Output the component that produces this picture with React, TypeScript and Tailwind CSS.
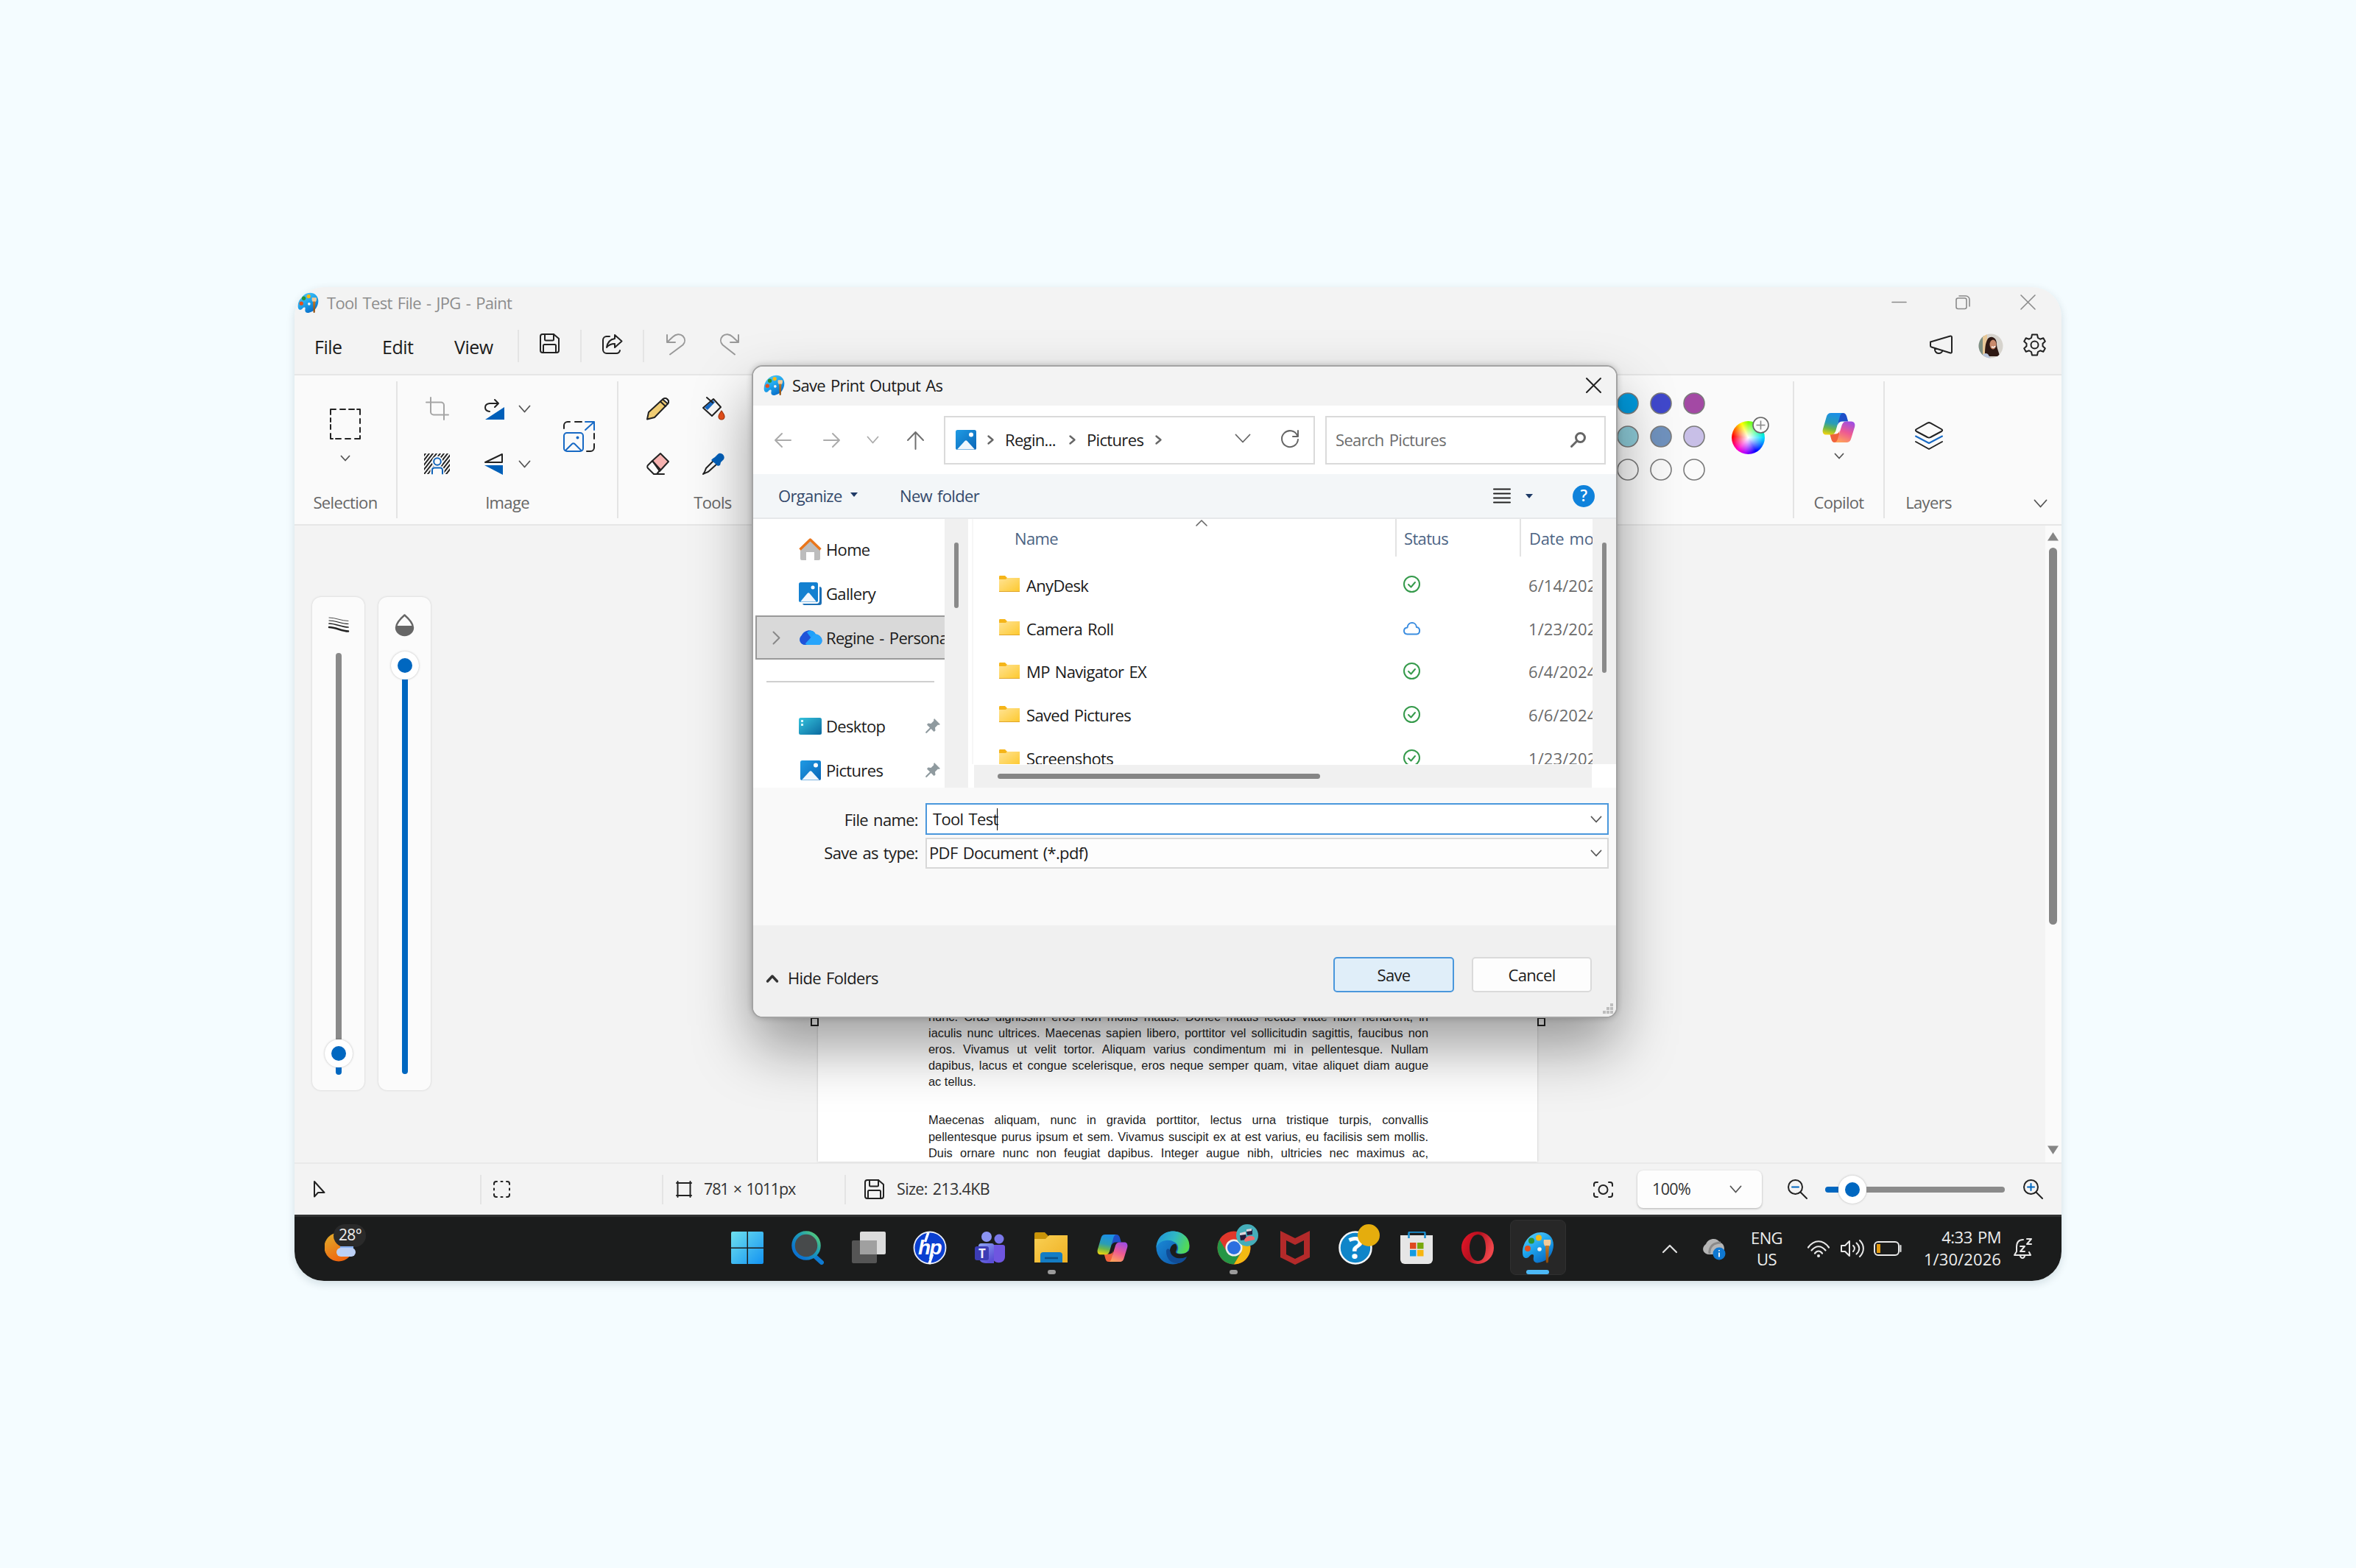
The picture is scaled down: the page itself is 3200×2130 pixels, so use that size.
import React from "react";

interface IconProps {
    w: number;
    h: number;
    className?: string;
    children?: React.ReactNode;
    vb?: string;
    sw?: number;
    color?: string;
}

// Base line icon, the viewBox follows the size unless it is given
const Icon = ({ w, h, className = "", children, vb, sw = 2, color = "#222" }: IconProps) => (
    <svg
        width={w}
        height={h}
        viewBox={vb ?? `0 0 ${w} ${h}`}
        className={`shrink-0 overflow-visible ${className}`}
        fill="none"
        stroke={color}
        strokeWidth={sw}
        strokeLinecap="round"
        strokeLinejoin="round"
    >
        {children}
    </svg>
);

const Down = ({ w, h, sw = 1.8, color = "#555", className = "" }: IconProps) => (
    <Icon w={w} h={h} sw={sw} color={color} className={className}>
        <path d={`M0.5 0.5L${w / 2} ${h - 0.5}L${w - 0.5} 0.5`} />
    </Icon>
);

const Right = ({ w, h, sw = 2, color = "#555", className = "" }: IconProps) => (
    <Icon w={w} h={h} sw={sw} color={color} className={className}>
        <path d={`M0.5 0.5L${w - 0.5} ${h / 2}L0.5 ${h - 0.5}`} />
    </Icon>
);

const PaintIcon = ({ size, className = "" }: { size: number; className?: string }) => (
    <svg width={size} height={size} viewBox="0 0 44 44" className={`shrink-0 ${className}`}>
        <defs>
            <linearGradient id="paintBlue" x1="0" y1="0" x2="0.6" y2="1">
                <stop offset="0" stopColor="#5fd2fb" />
                <stop offset="0.55" stopColor="#1ea4ec" />
                <stop offset="1" stopColor="#0a6fc9" />
            </linearGradient>
            <linearGradient id="paintBrush" x1="0" y1="0" x2="0" y2="1">
                <stop offset="0" stopColor="#c47a2a" />
                <stop offset="1" stopColor="#8a4708" />
            </linearGradient>
        </defs>
        <path
            d="M26 1C12 1 1 14 1 28c0 6 2 8 5 8 4 0 5-5 8-5 4 0 1 4 2 8 1 3 4 4 8 3 12-2 19-13 19-24C43 8 36 1 26 1z"
            fill="url(#paintBlue)"
        />
        <circle cx="8" cy="23" r="4" fill="#e2501f" />
        <circle cx="13" cy="12.500" r="4" fill="#2a9433" />
        <circle cx="23" cy="8.500" r="4" fill="#f6bb14" />
        <circle cx="24" cy="24" r="2.800" className="fill-[#f3f3f3]" />
        <path d="M30 11h9c1 4 0 8-2 9h-5c-2-1-3-5-2-9z" fill="#f2cb9b" />
        <path d="M32 19h5l-1 22c-.3 2-3 2-3.200 0z" fill="url(#paintBrush)" />
    </svg>
);

const CopilotIcon = ({ w, h, id }: { w: number; h: number; id: string }) => (
    <svg width={w} height={h} viewBox="0 0 48 44" preserveAspectRatio="none" className="shrink-0">
        <defs>
            <linearGradient id={`${id}a`} x1="0.4" y1="0" x2="0.2" y2="1">
                <stop offset="0" stopColor="#1b8fe6" />
                <stop offset="0.45" stopColor="#2a9db5" />
                <stop offset="0.7" stopColor="#6bb54b" />
                <stop offset="1" stopColor="#f5d40c" />
            </linearGradient>
            <linearGradient id={`${id}b`} x1="0.7" y1="0" x2="0.3" y2="1">
                <stop offset="0" stopColor="#a04de0" />
                <stop offset="0.5" stopColor="#ee5a92" />
                <stop offset="1" stopColor="#ffa35a" />
            </linearGradient>
        </defs>
        <path d="M24 1h6c3 0 4.500 2 5.500 5l2 7h-8c-4 0-6 2-7 5z" fill="#1e4fc8" />
        <path d="M24 43h-6c-3 0-4-2-5-5l-2-7h7c4 0 6-1 7-5z" fill="#f0623c" />
        <path d="M13 1h18c-4 0-5 3-6 7l-5 17c-1 4-3 7-7 7H6c-5 0-6-4-5-8L6 7c1-4 3-6 7-6z" fill={`url(#${id}a)`} />
        <path d="M35 43H17c4 0 5-3 6-7l5-16c1-4 3-7 7-7h7c5 0 6 4 5 8l-5 16c-1 4-3 6-7 6z" fill={`url(#${id}b)`} />
    </svg>
);

const PictureIcon = ({ w = 28, h = 27 }: { w?: number; h?: number }) => (
    <svg width={w} height={h} viewBox="0 0 28 27" className="shrink-0">
        <defs>
            <linearGradient id="picBlue" x1="0" y1="0" x2="1" y2="1">
                <stop offset="0" stopColor="#1f9be4" />
                <stop offset="1" stopColor="#0a66b8" />
            </linearGradient>
        </defs>
        <rect width="28" height="27" rx="2.500" fill="url(#picBlue)" />
        <path d="M2 26.500L12.500 15c1-1 2-1 3 0L26 26.500z" fill="#f1f7fd" />
        <circle cx="21" cy="6.500" r="3" fill="#fff" />
    </svg>
);

const FolderIcon = () => (
    <svg width="28" height="22" viewBox="0 0 28 22" className="shrink-0">
        <defs>
            <linearGradient id="folderFront" x1="0" y1="0" x2="1" y2="1">
                <stop offset="0" stopColor="#ffe394" />
                <stop offset="1" stopColor="#fdc92f" />
            </linearGradient>
        </defs>
        <path d="M0 1.500C0 .5.500 0 1.500 0H8l3 3H28v4H0z" fill="#f5b519" />
        <path d="M0 5h9l2-2h17v18.500H0z" fill="url(#folderFront)" />
        <path d="M0 21.500h28" stroke="#e0a52a" />
    </svg>
);

const SavedIcon = ({ size = 27 }: { size?: number }) => (
    <Icon w={size} h={size} vb="0 0 27 27">
        <path d="M4 1h15l7 6v16a3 3 0 0 1-3 3H4a3 3 0 0 1-3-3V4a3 3 0 0 1 3-3z" />
        <path d="M7 1v7a1.500 1.500 0 0 0 1.500 1.500h9A1.500 1.500 0 0 0 19 8V1M5 26V16.500A1.500 1.500 0 0 1 6.500 15h14a1.500 1.500 0 0 1 1.500 1.500V26" />
    </Icon>
);

const Pin = () => (
    <svg width="20" height="20" viewBox="0 0 20 20" className="shrink-0">
        <path d="M12 0l8 8-2 1-1-.5-4 4 .5 4-2 1.500-4-4L1.500 20 0 19.500.500 18 6 12.500l-4-4L3.500 6.500l4 .5 4-4L11 2z" fill="#8f9a9f" />
    </svg>
);

const TitleBar = () => (
    <div className="flex h-[44px] items-start text-[#8d8d8d]">
        <PaintIcon size={29} className="ml-[4px] mt-[7px]" />
        <span className="ml-[11px] mt-[6px] leading-[30px]">Tool Test File - JPG - Paint</span>
        <div className="ml-auto mr-[36px] mt-[11px] flex items-center">
            <Icon w={19} h={19} color="#8a8a8a" sw={1.6}><path d="M0 9.500h19" /></Icon>
            <Icon w={20} h={19} color="#8a8a8a" sw={1.6} className="ml-[67px]">
                <rect x="1" y="4" width="14" height="14.500" rx="2.500" />
                <path d="M5 1h9a5 5 0 0 1 5 5v9" />
            </Icon>
            <Icon w={19} h={19} color="#8a8a8a" sw={1.6} className="ml-[69px]"><path d="M0 0l19 19M19 0L0 19" /></Icon>
        </div>
    </div>
);

const Divider = ({ className = "" }: { className?: string }) => <div className={`w-[2px] shrink-0 bg-[#e4e4e4] ${className}`} />;

const MenuBar = () => (
    <div className="flex h-[76px] items-start border-b-2 border-[#e6e6e6]">
        <div className="flex w-[303px] shrink-0 pl-[27px] pt-[20px] text-[25px] leading-[34px] tracking-[-0.5px]">
            <span className="w-[92px]">File</span>
            <span className="w-[98px]">Edit</span>
            <span>View</span>
        </div>
        <Divider className="mt-[14px] h-[44px]" />
        <div className="flex w-[83px] justify-center pt-[19px]"><SavedIcon /></div>
        <Divider className="mt-[14px] h-[44px]" />
        <div className="flex w-[83px] justify-center pt-[20px]">
            <Icon w={28} h={27}>
                <path d="M10 3H6a5 5 0 0 0-5 5v13a5 5 0 0 0 5 5h13a5 5 0 0 0 5-4" />
                <path d="M17 1l9.500 8.500L17 18v-5c-5 0-8 1-11 5 1-7 4-11 11-12z" />
            </Icon>
        </div>
        <Divider className="mt-[14px] h-[44px]" />
        <Icon w={26} h={29} color="#999" className="ml-[30px] mt-[19px]">
            <path d="M1 2v10h11M1.500 11.500L9 4.500c4-4 10-4.500 13.500-1 3.500 3.700 3.300 8.500 0 12L5 28.500" />
        </Icon>
        <Icon w={26} h={29} color="#999" className="ml-[47px] mt-[19px]">
            <path d="M25 2v10H14M24.500 11.500L17 4.500c-4-4-10-4.500-13.500-1-3.500 3.700-3.300 8.500 0 12L20 28.500" />
        </Icon>
        <div className="ml-auto mr-[22px] flex items-center pt-[16px]">
            <Icon w={31} h={27} className="-mt-[3px]">
                <path d="M1 10.500L28 2.500a1.500 1.500 0 0 1 2 1.500v20a1.500 1.500 0 0 1-2 1.500L2.500 17.500A2 2 0 0 1 1 15.500zM7 19.500c-.5 3 1.500 6.500 5 6.500s5-2 5.500-4" />
            </Icon>
            <svg width="34" height="34" viewBox="0 0 34 34" className="ml-[35px] mt-[3px] shrink-0">
                <clipPath id="avatarClip"><circle cx="17" cy="17" r="16.500" /></clipPath>
                <g clipPath="url(#avatarClip)">
                    <rect width="34" height="34" fill="#d6d3cd" />
                    <rect width="8" height="34" fill="#7d8f83" />
                    <rect x="6" width="6" height="34" fill="#e8c898" />
                    <path d="M13 7c5-5 12-1 12 7 0 7 3 10 4 17H9c0-8 0-18 4-24z" fill="#2e1813" />
                    <ellipse cx="20" cy="15" rx="4.500" ry="6.500" fill="#c98a6c" />
                    <path d="M18 18c2 1 4 1 5-1" stroke="#fff" strokeWidth="1.500" fill="none" />
                    <path d="M4 34c1-7 6-8 9-6l4 6z" fill="#b9c6dc" />
                </g>
            </svg>
            <Icon w={29} h={31} className="-mt-[1px] ml-[28px]">
                <path d="M11 1.500h7l1 4.500 3 1.700 4.300-1.500 2.500 4.500-3.300 3v3.600l3.300 3-2.500 4.500-4.300-1.500-3 1.700-1 4.500h-7l-1-4.500-3-1.700-4.300 1.500L.2 20.300l3.300-3v-3.600l-3.300-3 2.500-4.500L7 7.700 10 6z" />
                <circle cx="14.500" cy="15.500" r="5" />
            </Icon>
        </div>
    </div>
);

const GroupLabel = ({ children }: { children: React.ReactNode }) => (
    <span className="mt-auto pb-[13px] text-center leading-[34px] text-[#666]">{children}</span>
);

const palette = ["#0099dc", "#4048cc", "#a349a4", "#8dcbd8", "#7092be", "#c8bfe7", "transparent", "transparent", "transparent"];

// Diagonal hatch offsets of the background removal icon
const hatch = [-20, -15, -10, -5, 0, 5, 10, 15, 20, 25, 30];

const Ribbon = () => (
    <div className="flex h-[204px] border-b-2 border-[#e6e6e6] bg-[#fafafa] text-[22px]">
        <div className="flex w-[138px] flex-col items-center pt-[45px]">
            <Icon w={42} h={42}>
                <path d="M1 8V1h7M14 1h7M26 1h7M37 1h4v7M41 14v6M41 26v6M41 37v4h-7M28 41h-7M15 41H8M4 41H1v-7M1 28v-6M1 18v-5" />
            </Icon>
            <Down w={12} h={7} className="mt-[22px]" />
            <GroupLabel>Selection</GroupLabel>
        </div>
        <Divider className="mt-[8px] h-[186px]" />
        <div className="flex w-[298px] flex-col">
            <div className="flex pl-[36px] pt-[30px]">
                <div className="flex w-[82px] flex-col">
                    <Icon w={30} h={30} color="#a5a5a5" className="ml-[3px]">
                        <path d="M0 6.500h20a4 4 0 0 1 4 4V30M6 0v19.500a4 4 0 0 0 4 4H30" />
                    </Icon>
                    <Icon w={35} h={28} className="mt-[46px]">
                        <clipPath id="hatchClip"><rect width="35" height="28" /></clipPath>
                        <g clipPath="url(#hatchClip)">
                            {hatch.map((x) => (
                                <path key={x} d={`M${x} 28L${x + 22} 0`} />
                            ))}
                            <circle cx="18" cy="11" r="7.500" fill="#fafafa" stroke="none" />
                            <path d="M8.500 28v-5a6 6 0 0 1 6-6h7a6 6 0 0 1 6 6v5z" fill="#fafafa" stroke="none" />
                        </g>
                        <circle cx="18" cy="11" r="4.800" stroke="#0f62b8" />
                        <path d="M11 27.500v-5a3 3 0 0 1 3-3h8a3 3 0 0 1 3 3v5" stroke="#0f62b8" />
                    </Icon>
                </div>
                <div className="flex w-[107px] flex-col gap-[46px]">
                    <div className="flex items-center">
                        <Icon w={27} h={28} className="mt-[2px]">
                            <path d="M14 1l5 5-5 5M19 6H7c-8 1-8 10 0 11" />
                            <path d="M27 11v17H1z" fill="#005fb8" stroke="none" />
                        </Icon>
                        <Down w={15} h={9} className="ml-[20px]" />
                    </div>
                    <div className="flex items-center">
                        <Icon w={25} h={29}>
                            <path d="M24 1v11H1z" />
                            <path d="M0 16h25v13z" fill="#005fb8" stroke="none" />
                        </Icon>
                        <Down w={15} h={9} className="ml-[22px]" />
                    </div>
                </div>
                <Icon w={43} h={42} className="mt-[32px]">
                    <path d="M1 10V6a5 5 0 0 1 5-5h3M16 1h9M42 17v7M42 31v5a5 5 0 0 1-5 5h-5" />
                    <g stroke="#1769c4">
                        <path d="M30 1h12v11M41 2L30 12" />
                        <rect x="1" y="16" width="26" height="25" rx="4" />
                        <path d="M3 40l9-9c1-1 2.500-1 3.500 0l9 9" />
                        <circle cx="19.500" cy="22.500" r="1" fill="#1769c4" />
                    </g>
                </Icon>
            </div>
            <GroupLabel>Image</GroupLabel>
        </div>
        <Divider className="mt-[8px] h-[186px]" />
        <div className="flex w-[256px] flex-col">
            <div className="grid grid-cols-[76px_76px] gap-y-[45px] pl-[38px] pt-[30px]">
                <Icon w={31} h={30}>
                    <path d="M3 20L22 2.500c5-4 10 2 7 6L11 27 1 29.500z" fill="#f0cd74" />
                    <path d="M22 2.500c5-4 10 2 7 6z" fill="#fff" />
                    <path d="M19 5.500l7 6.500" />
                </Icon>
                <Icon w={31} h={30}>
                    <path d="M1 14L15 2l10 11-12 12z" fill="#fafafa" />
                    <path d="M3 13.500L14 3.500l3 3L7 17z" fill="#1769c4" stroke="none" />
                    <path d="M6 0l8 7" />
                    <path d="M26 18c3 4 4 6 4 8a4 4 0 0 1-8 0c0-2 1-4 4-8z" fill="#e8501c" stroke="#a5330b" strokeWidth="1.200" />
                </Icon>
                <Icon w={31} h={30}>
                    <path d="M8 11L19 1l11 11-12 13z" fill="#f6b2b0" />
                    <path d="M8 11l11 12-5 6h-4l-8-8c-1-1-1-3 0-4zM12 29h12" />
                </Icon>
                <Icon w={31} h={30}>
                    <path d="M15 11L5 21c-1 2-1 5-4 8 3-2 6-2 8-4l11-10" />
                    <path d="M14 8l3-2 4-4c4-4 11 2 8 7l-4 4-1 4-3 1-9-8z" fill="#005fb8" stroke="none" />
                </Icon>
            </div>
            <GroupLabel>Tools</GroupLabel>
        </div>
        <div className="ml-auto flex">
            <div className="grid h-fit grid-cols-[45px_45px_45px] grid-rows-[45px_45px_45px] pt-[15px]">
                {palette.map((color, i) => (
                    <svg key={i} width="30" height="30" className="m-auto">
                        <circle cx="15" cy="15" r="14" fill={color} stroke="#7a7a7a" strokeWidth="1.600" />
                    </svg>
                ))}
            </div>
            <div className="relative ml-[29px] mt-[62px] h-[45px] w-[45px] rounded-full bg-[radial-gradient(circle,#fff_0%,transparent_65%),conic-gradient(#8f0,#0f8_60deg,#0df_90deg,#00f_150deg,#a0f_190deg,#f0c_220deg,#f00_275deg,#ff8c00_310deg,#ff0_335deg,#8f0)]">
                <svg width="23" height="23" className="absolute -right-[6px] -top-[6px]">
                    <circle cx="11.500" cy="11.500" r="10.500" fill="#fafafa" stroke="#666" strokeWidth="1.600" />
                    <path d="M11.500 5.500v12M5.500 11.500h12" stroke="#888" strokeWidth="1.600" />
                </svg>
            </div>
        </div>
        <Divider className="ml-[38px] mt-[8px] h-[186px]" />
        <div className="flex w-[121px] flex-col items-center pt-[50px]">
            <CopilotIcon w={45} h={42} id="cpR" />
            <Down w={12} h={7} className="mt-[14px]" />
            <GroupLabel>Copilot</GroupLabel>
        </div>
        <Divider className="mt-[8px] h-[186px]" />
        <div className="flex w-[119px] flex-col items-center pt-[63px]">
            <Icon w={38} h={38} color="#222">
                <path d="M17 1.700a4 4 0 0 1 4 0L36 10c1.500 1 1.500 2 0 3L21 21a4 4 0 0 1-4 0L2 13c-1.500-1-1.500-2 0-3z" />
                <path d="M1 19.500l18 9.500 18-9.500" stroke="#1769c4" />
                <path d="M1 27l18 10 18-10" />
            </Icon>
            <GroupLabel>Layers</GroupLabel>
        </div>
        <div className="flex w-[121px] items-end pb-[23px] pl-[84px]">
            <Down w={17} h={10} />
        </div>
    </div>
);

const BrushSlider = () => (
    <div className="flex h-[670px] w-[71px] flex-col items-center rounded-[12px] bg-[#fbfbfb] pt-[27px] shadow-[0_0_3px_rgba(0,0,0,0.16)]">
        <Icon w={28} h={21} sw={0.8}>
            <path d="M1 1c9 0 17 4.500 26 4.500" />
            <path d="M1 5c9 0 17 4.500 26 4.500" strokeWidth="1.200" />
            <path d="M1 9c9 0 17 5 26 5" strokeWidth="1.700" />
            <path d="M1 14c9 0 17 5.500 26 5.500" strokeWidth="2.500" />
        </Icon>
        <div className="mt-[28px] h-[525px] w-[8px] rounded-t-full bg-[#8a8a8a]" />
        <div className="ml-[1px] flex size-[38px] items-center justify-center rounded-full bg-white shadow-[0_0_3px_rgba(0,0,0,0.25)]">
            <div className="size-[20px] rounded-full bg-[#0067c0]" />
        </div>
        <div className="h-[10px] w-[8px] rounded-b-full bg-[#0067c0]" />
    </div>
);

const OpacitySlider = () => (
    <div className="flex h-[670px] w-[71px] flex-col items-center rounded-[12px] bg-[#fbfbfb] pt-[23px] shadow-[0_0_3px_rgba(0,0,0,0.16)]">
        <Icon w={25} h={30} color="#666" sw={2.4}>
            <path d="M12.500 1.500C5 8 1 13 1 18.500a11.500 10.500 0 0 0 23 0C24 13 20 8 12.500 1.500z" />
            <path d="M1 16h23v3a11.500 10 0 0 1-23 0z" fill="#666" stroke="none" />
        </Icon>
        <div className="ml-[1px] mt-[21px] flex size-[38px] shrink-0 items-center justify-center rounded-full bg-white shadow-[0_0_3px_rgba(0,0,0,0.25)]">
            <div className="size-[20px] rounded-full bg-[#0067c0]" />
        </div>
        <div className="h-[536px] w-[8px] rounded-b-full bg-[#0067c0]" />
    </div>
);

const firstParagraph = [
    "nunc. Cras dignissim eros non mollis mattis. Donec mattis lectus vitae nibh hendrerit, in",
    "iaculis nunc ultrices. Maecenas sapien libero, porttitor vel sollicitudin sagittis, faucibus non",
    "eros. Vivamus ut velit tortor. Aliquam varius condimentum mi in pellentesque. Nullam",
    "dapibus, lacus et congue scelerisque, eros neque semper quam, vitae aliquet diam augue",
];

const secondParagraph = [
    "Maecenas aliquam, nunc in gravida porttitor, lectus urna tristique turpis, convallis",
    "pellentesque purus ipsum et sem. Vivamus suscipit ex at est varius, eu facilisis sem mollis.",
    "Duis ornare nunc non feugiat dapibus. Integer augue nibh, ultricies nec maximus ac,",
];

const Canvas = () => (
    <div className="flex h-[865px] overflow-hidden">
        <div className="flex gap-[19px] pl-[24px] pt-[97px]">
            <BrushSlider />
            <OpacitySlider />
        </div>
        <div className="relative ml-[526px] h-[864px] w-[977px] bg-white pl-[150px] pr-[148px] pt-[656px] font-['Liberation_Sans',Arial,sans-serif] text-[16.400px] leading-[22.1px] tracking-normal [word-spacing:0px] text-[#1c1c1c] shadow-[0_0_3px_rgba(0,0,0,0.2)]">
            {firstParagraph.map((line) => (
                <p key={line} className="whitespace-nowrap [text-align-last:justify]">{line}</p>
            ))}
            <p className="mb-[30px]">ac tellus.</p>
            {secondParagraph.map((line) => (
                <p key={line} className="whitespace-nowrap [text-align-last:justify]">{line}</p>
            ))}
            <div className="absolute -left-[10px] top-[668px] h-[12px] w-[11px] border-2 border-[#222] bg-white" />
            <div className="absolute -right-[11px] top-[668px] h-[12px] w-[11px] border-2 border-[#222] bg-white" />
        </div>
        <div className="ml-auto flex w-[22px] flex-col items-center bg-[#fafafa] pr-[1px] pt-[9px]">
            <svg width="15" height="12"><path d="M7.500 0L15 11.500H0z" fill="#858585" /></svg>
            <div className="mt-[9px] h-[512px] w-[11px] rounded-full bg-[#858585]" />
            <svg width="15" height="12" className="mb-[11px] mt-auto"><path d="M0 .5h15L7.500 12z" fill="#858585" /></svg>
        </div>
    </div>
);

const StatusBar = () => (
    <div className="flex h-[71px] items-center border-t-2 border-[#e9e9e9] text-[21.500px] text-[#333]">
        <div className="flex w-[252px] pl-[26px]">
            <Icon w={15} h={23}><path d="M1 1v20.500l5-5.500h8.500z" /></Icon>
        </div>
        <Divider className="h-[40px]" />
        <div className="flex w-[245px] pl-[16px]">
            <Icon w={23} h={23}>
                <path d="M1 5V4a3 3 0 0 1 3-3h1M10.500 1h2M18 1h1a3 3 0 0 1 3 3v1M22 10.500v2M22 18v1a3 3 0 0 1-3 3h-1M12.500 22h-2M5 22H4a3 3 0 0 1-3-3v-1M1 12.500v-2" />
            </Icon>
        </div>
        <Divider className="h-[40px]" />
        <div className="flex w-[246px] items-center pl-[17px]">
            <Icon w={22} h={23}><path d="M2.500 1v21M19.500 1v21M1 3h20M1 20h20" /></Icon>
            <span className="ml-[16px] tracking-[-1.150px]">781 × 1011px</span>
        </div>
        <Divider className="h-[40px]" />
        <div className="flex items-center pl-[25px]">
            <SavedIcon />
            <span className="ml-[17px]">Size: 213.4KB</span>
        </div>
        <div className="ml-auto mr-[25px] flex items-center">
            <Icon w={27} h={22}>
                <path d="M1 6V4a3 3 0 0 1 3-3h2M21 1h2a3 3 0 0 1 3 3v2M26 16v2a3 3 0 0 1-3 3h-2M6 21H4a3 3 0 0 1-3-3v-2" />
                <circle cx="13.500" cy="11" r="6" />
            </Icon>
            <div className="ml-[33px] flex h-[51px] w-[169px] items-center justify-between rounded-[8px] bg-[#fdfdfd] pl-[20px] pr-[28px] shadow-[0_1px_3px_rgba(0,0,0,0.28)]">
                <span>100%</span>
                <Down w={15} h={9} />
            </div>
            <Icon w={27} h={27} className="ml-[35px]">
                <circle cx="10.500" cy="10.500" r="9.500" />
                <path d="M17.500 17.500L26 26" />
                <path d="M6 10.500h9" stroke="#0067c0" />
            </Icon>
            <div className="ml-[24px] flex items-center">
                <div className="h-[8px] w-[18px] rounded-l-full bg-[#0067c0]" />
                <div className="flex size-[38px] items-center justify-center rounded-full bg-white shadow-[0_0_3px_rgba(0,0,0,0.25)]">
                    <div className="size-[20px] rounded-full bg-[#0067c0]" />
                </div>
                <div className="h-[8px] w-[188px] rounded-r-full bg-[#8a8a8a]" />
            </div>
            <Icon w={27} h={27} className="ml-[25px]">
                <circle cx="10.500" cy="10.500" r="9.500" />
                <path d="M17.500 17.500L26 26" />
                <path d="M6 10.500h9M10.500 6v9" stroke="#0067c0" />
            </Icon>
        </div>
    </div>
);

interface TaskProps {
    children: React.ReactNode;
    running?: boolean;
}

const Task = ({ children, running }: TaskProps) => (
    <div className="flex w-[82.650px] shrink-0 flex-col items-center">
        <div className="flex h-[50px] items-center justify-center">{children}</div>
        {running && <div className="mt-[5px] h-[6px] w-[11px] rounded-full bg-[#9b9b9b]" />}
    </div>
);

const TaskBar = () => (
    <div className="flex h-[90px] border-t-[3px] border-[#303131] bg-[#1b1c1c] text-[22px] text-[#ededed]">
        <div className="w-[573.500px] shrink-0 pl-[41px] pt-[10px]">
            <div className="relative h-[52px] w-[56px]">
                <svg width="56" height="52" className="absolute">
                    <defs>
                        <linearGradient id="sun" x1="0" y1="0" x2="0.5" y2="1">
                            <stop offset="0" stopColor="#e0b02c" />
                            <stop offset="1" stopColor="#f0650e" />
                        </linearGradient>
                    </defs>
                    <circle cx="19" cy="31" r="19.500" fill="url(#sun)" />
                    <rect x="12" y="0" width="44" height="31" rx="15.500" fill="#2a2a2a" />
                    <path d="M21 30h18v5H21z" fill="#86aef0" />
                    <rect x="16" y="32" width="26" height="12" rx="6" fill="#bcd0f5" />
                </svg>
                <span className="absolute left-[19px] top-0 text-[21px] leading-[29px]">28°</span>
            </div>
        </div>
        <div className="flex pt-[17px]">
            <Task>
                <svg width="44" height="44">
                    <defs>
                        <linearGradient id="win" x1="0" y1="0" x2="1" y2="1">
                            <stop offset="0" stopColor="#6ee0ee" />
                            <stop offset="1" stopColor="#1393f2" />
                        </linearGradient>
                    </defs>
                    <path d="M2 0h19.500v21.500H0V2a2 2 0 0 1 2-2zM23 0h19a2 2 0 0 1 2 2v19.500H23zM0 23h21.500v21H2a2 2 0 0 1-2-2zM23 23h21v19a2 2 0 0 1-2 2H23z" fill="url(#win)" />
                </svg>
            </Task>
            <Task>
                <svg width="44" height="46">
                    <defs>
                        <linearGradient id="search" x1="1" y1="0" x2="0.2" y2="0.8">
                            <stop offset="0" stopColor="#62d56b" />
                            <stop offset="0.5" stopColor="#1e9db5" />
                            <stop offset="1" stopColor="#0c74cf" />
                        </linearGradient>
                    </defs>
                    <path d="M30 33l11 10" stroke="#0f7ad0" strokeWidth="6" strokeLinecap="round" />
                    <circle cx="20" cy="20" r="17.500" fill="#474a4b" stroke="url(#search)" strokeWidth="4.500" />
                </svg>
            </Task>
            <Task>
                <svg width="46" height="44">
                    <rect x="0" y="12" width="34" height="31" rx="2" fill="#555" />
                    <rect x="11" y="0" width="35" height="31" rx="2" fill="#dcdcdc" />
                    <path d="M11 12h23v19H11z" fill="#a0a0a0" />
                </svg>
            </Task>
            <Task>
                <svg width="46" height="46">
                    <circle cx="23" cy="23" r="21.500" fill="#0a3fd0" stroke="#e9edf8" strokeWidth="1.800" />
                    <text x="7" y="32" fontFamily="'Liberation Sans'" fontStyle="italic" fontWeight="700" fontSize="28" fill="#fff" letterSpacing="-1.500">hp</text>
                    <path d="M21 2l-4.500 13M26.500 32l-4.500 13" stroke="#fff" strokeWidth="3.500" />
                </svg>
            </Task>
            <Task>
                <svg width="42" height="44">
                    <defs>
                        <linearGradient id="teams" x1="0" y1="0" x2="0.6" y2="1">
                            <stop offset="0" stopColor="#8fa6f4" />
                            <stop offset="1" stopColor="#5a4fd6" />
                        </linearGradient>
                    </defs>
                    <circle cx="33" cy="10" r="6.500" fill="#7b78ea" />
                    <circle cx="16" cy="7" r="7" fill="#8c95f2" />
                    <path d="M24 18h14a3 3 0 0 1 3 3v13c0 11-17 11-17 0z" fill="#6f56e0" />
                    <path d="M5 20a4 4 0 0 1 4-4h14a3 3 0 0 1 3 3v24H15C9 43 5 39 5 33z" fill="url(#teams)" />
                    <rect x="0" y="20" width="19" height="19" rx="3" fill="#3c3cb4" />
                    <text x="9.500" y="35.500" textAnchor="middle" fontFamily="'Open Sans'" fontWeight="700" fontSize="17" fill="#f0f0fb">T</text>
                </svg>
            </Task>
            <Task running>
                <svg width="46" height="42">
                    <defs>
                        <linearGradient id="explorer" x1="0" y1="0" x2="1" y2="1">
                            <stop offset="0" stopColor="#f9d054" />
                            <stop offset="1" stopColor="#efb023" />
                        </linearGradient>
                    </defs>
                    <path d="M0 2a2 2 0 0 1 2-2h12l5 5h26v8H0z" fill="#c99409" />
                    <path d="M0 9h15l5-5h25v37H0z" fill="url(#explorer)" />
                    <path d="M8 41V31a4 4 0 0 1 4-4h22a4 4 0 0 1 4 4v10z" fill="#147dc4" />
                    <path d="M14 35h18" stroke="#0b4f86" strokeWidth="2.500" />
                </svg>
            </Task>
            <Task><CopilotIcon w={42} h={39} id="cpT" /></Task>
            <Task>
                <svg width="46" height="46" viewBox="0 0 46 46">
                    <defs>
                        <linearGradient id="edgeTop" x1="0" y1="0.3" x2="1" y2="0.6">
                            <stop offset="0" stopColor="#2195d8" />
                            <stop offset="0.5" stopColor="#30b8c4" />
                            <stop offset="1" stopColor="#55dc4d" />
                        </linearGradient>
                        <linearGradient id="edgeLow" x1="0" y1="0" x2="1" y2="1">
                            <stop offset="0" stopColor="#1b92df" />
                            <stop offset="1" stopColor="#0d4ea0" />
                        </linearGradient>
                    </defs>
                    <circle cx="23" cy="23" r="22.500" fill="url(#edgeLow)" />
                    <path d="M.5 23C1 9 11 .5 23 .5 36 .5 45.500 9 45.500 20c0 8-5 11-11 11-5 0-7-1-5-4 1-2 2-9-5-12C16 10 3 14 .5 23z" fill="url(#edgeTop)" />
                    <path d="M19 26c1-5 4-9 8-8 2 3 2 6 .5 9-2 3 1 4.500 5 4.500 5 0 9-1 14-6 3 3-2 12-7 11-11 4-21-1-20.500-10.500z" fill="#1b1c1c" />
                    <path d="M14 28c0 11 8 17 17 16 5-1 9-4 11-9-9 5-22 2-23-9-3-3-5-1-5 2z" fill="#104c96" />
                </svg>
            </Task>
            <Task running>
                <div className="relative">
                    <svg width="46" height="46" viewBox="0 0 46 46">
                        <circle cx="23" cy="23" r="22.500" fill="#e0372b" />
                        <path d="M3.500 12A22.500 22.500 0 0 0 23 45.500l10-17L23 23 13 28z" fill="#259645" />
                        <path d="M23 45.500A22.500 22.500 0 0 0 42.500 12H23l10 17z" fill="#f3b912" />
                        <circle cx="23" cy="23" r="11.500" fill="#eee" />
                        <circle cx="23" cy="23" r="9" fill="#2b6fe0" />
                    </svg>
                    <svg width="30" height="30" className="absolute -right-[10px] -top-[9px]">
                        <circle cx="15" cy="15" r="15" fill="#45adb9" />
                        <path d="M5 15l8-2 1 8-8 1zM14 9l8-2v7l-7 1z" fill="#241c3c" />
                        <path d="M5 12l8-2v4l-8 1zM14 7l7-1v3l-7 1z" fill="#e2d5da" />
                        <path d="M11 21c3-5 9-7 14-3v3l-13 3z" fill="#ee6a6c" />
                    </svg>
                </div>
            </Task>
            <Task>
                <svg width="40" height="46">
                    <path d="M0 0l20 10L40 0v36L20 46 0 36zM8 13v19l12 6 12-6V13l-12 6z" fill="#b32a2a" fillRule="evenodd" />
                </svg>
            </Task>
            <Task>
                <div className="relative">
                    <svg width="46" height="46">
                        <circle cx="23" cy="23" r="21.500" fill="#0f85c9" stroke="#f2f6f9" strokeWidth="2.500" />
                        <text x="23" y="38" textAnchor="middle" fontFamily="'Open Sans'" fontWeight="700" fontSize="42" fill="#fff">?</text>
                    </svg>
                    <div className="absolute -right-[10px] -top-[9px] size-[30px] rounded-full bg-[#e5ad0d]" />
                </div>
            </Task>
            <Task>
                <svg width="44" height="44">
                    <path d="M11.500 10V2.500a2 2 0 0 1 2-2h18a2 2 0 0 1 2 2V10" fill="none" stroke="#1c8fd0" strokeWidth="2.500" />
                    <path d="M0 5h44v33a6 6 0 0 1-6 6H6a6 6 0 0 1-6-6z" fill="#e6e6e6" />
                    <path d="M11.500 9V4M33.500 9V4" stroke="#1c8fd0" strokeWidth="2.500" />
                    <path d="M13 15h8.500v8.500H13z" fill="#df4a20" />
                    <path d="M23 15h8.500v8.500H23z" fill="#78a80c" />
                    <path d="M13 25h8.500v8.500H13z" fill="#149be2" />
                    <path d="M23 25h8.500v8.500H23z" fill="#f7b50e" />
                </svg>
            </Task>
            <Task>
                <svg width="44" height="44">
                    <defs>
                        <linearGradient id="opera" x1="0" y1="0" x2="1" y2="0.4">
                            <stop offset="0" stopColor="#ee1629" />
                            <stop offset="0.5" stopColor="#b3101f" />
                            <stop offset="1" stopColor="#f0464b" />
                        </linearGradient>
                    </defs>
                    <path d="M22 0a22 22 0 1 1 0 44 22 22 0 1 1 0-44zM22.500 4C15 4 11 13 11 22s4 18 11.500 18S33 31 33 22 30 4 22.500 4z" fill="url(#opera)" fillRule="evenodd" />
                </svg>
            </Task>
            <div className="-mt-[13px] ml-[3px] flex h-[75px] w-[76px] flex-col items-center rounded-[8px] border border-[#303030] bg-[#272727] pt-[15px]">
                <PaintIcon size={44} />
                <div className="mt-[8px] h-[6px] w-[31px] rounded-full bg-[#4cb8f5]" />
            </div>
        </div>
        <div className="ml-auto mr-[39px] flex h-[86px] items-center">
            <Icon w={20} h={11} color="#e0e0e0" sw={2.2}><path d="M1 10L10 1l9 9" /></Icon>
            <svg width="31" height="34" className="ml-[35px]">
                <path d="M9 25c-9 0-12-9-5-14C7 3 19 1 23 9c7 1 8 12 2 16z" fill="#b5b5b5" />
                <path d="M9 24c-1-9 5-15 15-15" stroke="#8a8a8a" strokeWidth="3" fill="none" />
                <circle cx="22" cy="24" r="8.500" fill="#0f78d2" />
                <path d="M22 22.500v6M22 19v1.500" stroke="#fff" strokeWidth="1.800" />
            </svg>
            <div className="ml-[34px] flex w-[43px] flex-col items-center leading-[29px]">
                <span>ENG</span>
                <span>US</span>
            </div>
            <Icon w={30} h={23} color="#e8e8e8" sw={2.2} className="ml-[34px]">
                <path d="M1 9.500c8-11 20-11 28 0M5.500 13.500c6-7 13-7 19 0M10 17.500c3-4 7-4 10 0" />
                <circle cx="15" cy="21" r="2" fill="#e8e8e8" stroke="none" />
            </Icon>
            <Icon w={31} h={24} color="#e8e8e8" className="ml-[15px]">
                <path d="M1 8h5l6-6v20l-6-6H1zM17 8c2.500 2.500 2.500 5.500 0 8M21.500 4.500c5 4.500 5 10.500 0 15M26 1c6.500 6.500 6.500 15.500 0 22" />
            </Icon>
            <Icon w={38} h={20} color="#e8e8e8" className="ml-[14px]">
                <rect x="1" y="1" width="33" height="18" rx="5" />
                <path d="M36.500 6v8" />
                <path d="M4 4h5v12H4z" fill="#e39a10" stroke="none" />
            </Icon>
            <div className="mb-[2px] ml-[31px] flex w-[104px] flex-col items-end leading-[30px] tracking-[0.1px]">
                <span className="tracking-[-0.5px]">4:33 PM</span>
                <span>1/30/2026</span>
            </div>
            <Icon w={26} h={28} color="#e8e8e8" className="ml-[17px]">
                <path d="M13 2C6 2 4 7 4 12v6l-3 5h22l-2-4M9 24c1 4 5 4 6 0" />
                <path d="M9 11h6l-6 7h6M18 1h6l-6 7h6" />
            </Icon>
        </div>
    </div>
);

interface TreeItem {
    name: string;
    icon: React.ReactNode;
    pinned?: boolean;
}

const topItems: TreeItem[] = [
    {
        name: "Home",
        icon: (
            <svg width="31" height="30">
                <path d="M2 15L15.500 3 29 15v13a2 2 0 0 1-2 2h-6V19H10v11H4a2 2 0 0 1-2-2z" fill="#bdbdbd" />
                <path d="M1.500 15.500L15.500 2l14 13.500" fill="none" stroke="#e9761b" strokeWidth="3.500" strokeLinejoin="round" />
            </svg>
        ),
    },
    {
        name: "Gallery",
        icon: (
            <svg width="31" height="31">
                <path d="M28 6a3 3 0 0 1 3 3v19a3 3 0 0 1-3 3H8a3 3 0 0 1-3-2h19a4 4 0 0 0 4-4z" fill="#1d6fb4" />
                <rect width="26" height="27" rx="2.500" fill="#1380d0" />
                <path d="M2 26.500L11.500 15c1-1 2-1 3 0L24 26.500z" fill="#f1f7fd" />
                <circle cx="19" cy="7" r="2.500" fill="#fff" />
            </svg>
        ),
    },
];

const pinnedItems: TreeItem[] = [
    {
        name: "Desktop",
        icon: (
            <svg width="31" height="23">
                <defs>
                    <linearGradient id="desk" x1="0" y1="0" x2="1" y2="1">
                        <stop offset="0" stopColor="#35c3dc" />
                        <stop offset="1" stopColor="#0b6aa0" />
                    </linearGradient>
                </defs>
                <rect width="31" height="23" rx="2.500" fill="url(#desk)" />
                <path d="M3 3h3v3H3zM3 8h3v3H3z" fill="#d8f6fb" />
            </svg>
        ),
        pinned: true,
    },
    { name: "Pictures", icon: <PictureIcon />, pinned: true },
];

const TreeRow = ({ item }: { item: TreeItem }) => (
    <div className="flex h-[60px] items-center pl-[62px] pr-[6px]">
        <div className="flex w-[31px] justify-center">{item.icon}</div>
        <span className="ml-[6px]">{item.name}</span>
        {item.pinned && <div className="ml-auto"><Pin /></div>}
    </div>
);

const files = [
    { name: "AnyDesk", synced: true, date: "6/14/2024 3:12 PM" },
    { name: "Camera Roll", synced: false, date: "1/23/2026 8:40 AM" },
    { name: "MP Navigator EX", synced: true, date: "6/4/2024 9:05 AM" },
    { name: "Saved Pictures", synced: true, date: "6/6/2024 1:27 PM" },
    { name: "Screenshots", synced: true, date: "1/23/2026 8:41 AM" },
];

const FileList = () => (
    <div className="flex h-[365px] w-[880px] shrink-0 flex-col">
        <div className="flex h-[333px]">
            <div className="ml-[5px] w-[843px] overflow-hidden border-l-2 border-[#f7f7f7]">
                <div className="flex h-[51px] text-[#4c6484]">
                    <div className="relative w-[573px] shrink-0 pl-[56px] pt-[10px] leading-[32px]">
                        Name
                        <Icon w={14} h={7} color="#666" sw={1.6} className="absolute left-[303px] top-[2px]"><path d="M0 7l7-7 7 7" /></Icon>
                    </div>
                    <div className="w-[169px] shrink-0 border-l-2 border-[#e3e3e3] pl-[10px] pt-[10px] leading-[32px]">Status</div>
                    <div className="shrink-0 whitespace-nowrap border-l-2 border-[#e3e3e3] pl-[11px] pt-[10px] leading-[32px] tracking-[-0.3px]">Date modified</div>
                </div>
                <div className="pt-[10px]">
                    {files.map((file) => (
                        <div key={file.name} className="flex h-[58.800px] items-center">
                            <div className="flex w-[584px] shrink-0 items-center pl-[35px]">
                                <div className="mb-[4px]"><FolderIcon /></div>
                                <span className="ml-[9px]">{file.name}</span>
                            </div>
                            <div className="mb-[3px] w-[170px] shrink-0">
                                {file.synced ? (
                                    <Icon w={23} h={23} color="#359a4b">
                                        <circle cx="11.500" cy="11.500" r="10.500" />
                                        <path d="M7 12l3.500 3.500L16 9" />
                                    </Icon>
                                ) : (
                                    <Icon w={23} h={23} color="#3b8de0">
                                        <path d="M5.500 20.500c-6-.5-6-8.500 0-9 1-9 12-8 12.500-.5 5.500.5 5.500 9 0 9.500z" />
                                    </Icon>
                                )}
                            </div>
                            <span className="whitespace-nowrap tracking-[0.1px] text-[#6b6b6b]">{file.date}</span>
                        </div>
                    ))}
                </div>
            </div>
            <div className="w-[32px] bg-[#f0f0f0] pl-[13px] pt-[32px]">
                <div className="h-[177px] w-[6px] rounded-full bg-[#8a8a8a]" />
            </div>
        </div>
        <div className="ml-[8px] mt-[1px] flex h-[31px] w-[839px] items-center bg-[#f0f0f0] pl-[32px]">
            <div className="h-[7px] w-[438px] rounded-full bg-[#858585]" />
        </div>
    </div>
);

const SaveDialog = () => (
    <div className="absolute left-[621px] top-[106px] flex h-[887px] w-[1176px] flex-col overflow-hidden rounded-[15px] border-2 border-[#a3a3a3] bg-white text-[22px] text-[#1b1b1b] shadow-[0_40px_80px_rgba(0,0,0,0.38),0_0_8px_rgba(0,0,0,0.2)]">
        <div className="flex h-[53px] shrink-0 items-center bg-[#f3f3f3] pb-[2px] pl-[14px] pr-[21px]">
            <PaintIcon size={29} />
            <span className="ml-[10px]">Save Print Output As</span>
            <Icon w={19} h={19} sw={2} className="ml-auto"><path d="M0 0l19 19M19 0L0 19" /></Icon>
        </div>
        <div className="flex h-[93px] shrink-0 items-center">
            <Icon w={22} h={20} color="#ababab" className="ml-[29px]"><path d="M22 10H1M10 1l-9 9 9 9" /></Icon>
            <Icon w={22} h={20} color="#ababab" className="ml-[45px]"><path d="M0 10h21M12 1l9 9-9 9" /></Icon>
            <Down w={15} h={9} color="#ababab" className="ml-[37px]" />
            <Icon w={23} h={24} color="#707070" className="ml-[39px]"><path d="M11.500 24V1M1 12L11.500 1 22 12" /></Icon>
            <div className="ml-[27px] flex h-[66px] w-[504px] items-center border-2 border-[#dadada] pl-[14px]">
                <PictureIcon />
                <Right w={7} h={11} className="ml-[16px]" color="#666" sw={2.4} />
                <span className="ml-[16px] w-[69px]">Regin...</span>
                <Right w={7} h={11} className="ml-[19px]" color="#666" sw={2.4} />
                <span className="ml-[16px] w-[76px]">Pictures</span>
                <Right w={7} h={11} className="ml-[18px]" color="#666" sw={2.4} />
                <Down w={20} h={11} className="mb-[4px] ml-[101px]" color="#666" />
                <Icon w={24} h={24} color="#666" className="mb-[4px] ml-[42px]">
                    <path d="M22 7.500A11 11 0 1 0 23 13M23 1v8h-7" />
                </Icon>
            </div>
            <div className="ml-[14px] flex h-[66px] w-[381px] items-center border-2 border-[#dadada] pl-[12px] pr-[25px]">
                <span className="text-[#6d6d6d]">Search Pictures</span>
                <Icon w={21} h={21} color="#666" sw={3} className="ml-auto">
                    <circle cx="13.500" cy="7.500" r="6" />
                    <path d="M9 12l-7.500 7.500" />
                </Icon>
            </div>
        </div>
        <div className="flex h-[61px] shrink-0 items-center border-b-2 border-[#e6e8ea] bg-[#f3f6f8] text-[#33496b]">
            <span className="ml-[34px] w-[90px]">Organize</span>
            <svg width="10" height="6" className="mb-[4px] ml-[8px]"><path d="M0 0h10L5 6z" fill="#1e3a66" /></svg>
            <span className="ml-[57px]">New folder</span>
            <Icon w={22} h={21} color="#222" className="ml-auto"><path d="M0 1.500h22M0 7.500h22M0 13.500h22M0 19.500h22" /></Icon>
            <svg width="10" height="6" className="ml-[21px]"><path d="M0 0h10L5 6z" fill="#1e3a66" /></svg>
            <div className="ml-[54px] mr-[29px] flex size-[30px] items-center justify-center rounded-full bg-[#0f82db] text-[21px] font-semibold text-white">?</div>
        </div>
        <div className="flex h-[365px] shrink-0">
            <div className="w-[260px] shrink-0 overflow-hidden pt-[11px]">
                {topItems.map((item) => <TreeRow key={item.name} item={item} />)}
                <div className="ml-[3px] flex h-[60px] items-center whitespace-nowrap border-2 border-r-0 border-[#999] bg-[#d9d9d9]">
                    <Right w={9} h={17} className="ml-[22px]" color="#888" />
                    <svg width="31" height="21" viewBox="0 0 31 21" className="ml-[27px] shrink-0">
                        <path d="M7 20C0 19-2 11 3 7 7-1 18-2 22 6c9 0 12 12 4 14z" fill="#1b7df0" />
                        <path d="M3 7C7-1 18-2 22 6L9 20C0 20-2 12 3 7z" fill="#2153d8" />
                        <path d="M10 3c5-4 10-2 12 3l-6 5z" fill="#1ea0fa" />
                        <path d="M8 18L20 5c9 0 14 11 7 15H11c-2 0-3-1-3-2z" fill="#27a5fb" />
                    </svg>
                    <span className="ml-[5px]">Regine - Personal</span>
                </div>
                <div className="flex h-[60px] items-center pl-[18px]"><div className="h-[2px] w-[228px] bg-[#cfcfcf]" /></div>
                {pinnedItems.map((item) => <TreeRow key={item.name} item={item} />)}
            </div>
            <div className="w-[32px] shrink-0 bg-[#f0f0f0] pl-[13px] pt-[32px]">
                <div className="h-[89px] w-[6px] rounded-full bg-[#8a8a8a]" />
            </div>
            <FileList />
        </div>
        <div className="flex h-[187px] shrink-0 flex-col gap-[3px] bg-[#f9f9f9] pt-[21px]">
            <div className="flex h-[43px] items-center">
                <span className="mt-[2px] w-[224px] text-right">File name:</span>
                <div className="ml-[10px] flex h-[43px] w-[928px] items-center border-2 border-[#4a97dc] bg-white pl-[8px] pr-[8px]">
                    <span>Tool Test</span>
                    <div className="-ml-[2px] h-[30px] w-[1.500px] bg-black" />
                    <Down w={14} h={8} className="ml-auto" />
                </div>
            </div>
            <div className="flex h-[43px] items-center">
                <span className="w-[224px] text-right">Save as type:</span>
                <div className="ml-[10px] flex h-[42px] w-[928px] items-center border-2 border-[#d8d8d8] bg-[#fdfdfd] pl-[3px] pr-[8px]">
                    <span>PDF Document (*.pdf)</span>
                    <Down w={14} h={8} className="ml-auto" />
                </div>
            </div>
        </div>
        <div className="relative flex flex-1 items-start bg-[#f0f0f0]">
            <Icon w={16} h={10} color="#333" sw={3.4} className="ml-[18px] mt-[67px]"><path d="M1.500 9L8 2l6.500 7" /></Icon>
            <span className="ml-[13px] mt-[56px] leading-[30px]">Hide Folders</span>
            <button className="ml-auto mt-[43px] h-[48px] w-[164px] rounded-[5px] border-2 border-[#4a97dc] bg-[#e0eef9]">Save</button>
            <button className="ml-[24px] mr-[33px] mt-[43px] h-[48px] w-[163px] rounded-[5px] border-2 border-[#dadada] bg-[#fdfdfd]">Cancel</button>
            <svg width="15" height="15" className="absolute bottom-[3px] right-[3px]">
                <path d="M10 0h4v4h-4zM5 5h4v4H5zM10 5h4v4h-4zM0 10h4v4H0zM5 10h4v4H5zM10 10h4v4h-4z" fill="#bdbdbd" />
            </svg>
        </div>
    </div>
);

const App: React.FC = () => {
    return (
        <div className="h-[2130px] w-[3200px] bg-[#f4fcff] pl-[400px] pt-[390px] font-['Open_Sans',sans-serif] text-[22px] tracking-[-0.030em] text-[#1b1b1b] [word-spacing:2px]">
            <div className="relative h-[1350px] w-[2400px] rounded-[40px] shadow-[0_4px_12px_rgba(0,40,60,0.14)]">
                <div className="h-full overflow-hidden rounded-[40px] bg-[#f3f3f3]">
                    <TitleBar />
                    <MenuBar />
                    <Ribbon />
                    <Canvas />
                    <StatusBar />
                    <TaskBar />
                </div>
                <SaveDialog />
            </div>
        </div>
    );
};

export default App;
